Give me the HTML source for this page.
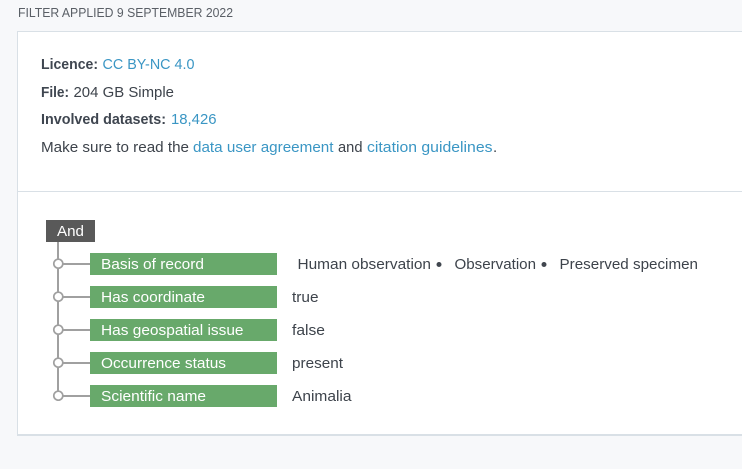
<!DOCTYPE html>
<html lang="en">
<head>
<meta charset="utf-8">
<title>Filter applied</title>
<style>
html,body{margin:0;padding:0;background:#f7f8fa;width:742px;height:469px;overflow:hidden}
svg{display:block}
text{font-family:"Liberation Sans",Arial,sans-serif;font-size:15px;fill:#3d434b}
.b{font-weight:700;fill:#3f4650}
.l{fill:#3a96c4}
.w{fill:#fff}
</style>
</head>
<body>
<svg width="742" height="469" viewBox="0 0 742 469" xmlns="http://www.w3.org/2000/svg">
<rect width="742" height="469" fill="#f7f8fa"/>
<text x="18" y="17" style="font-size:13px;fill:#5a5f66" textLength="215" lengthAdjust="spacingAndGlyphs">FILTER APPLIED 9 SEPTEMBER 2022</text>
<rect x="17.5" y="31.5" width="730" height="403" fill="#fff" stroke="#d9e0e6"/>
<rect x="17" y="434" width="725" height="2" fill="#d9e0e6"/>
<rect x="18" y="191" width="724" height="1" fill="#d9e0e6"/>

<text x="41" y="69" class="b" textLength="57" lengthAdjust="spacingAndGlyphs">Licence:</text>
<text x="102.5" y="69" class="l" textLength="92" lengthAdjust="spacingAndGlyphs">CC BY-NC 4.0</text>
<text x="41" y="97" class="b" textLength="28" lengthAdjust="spacingAndGlyphs">File:</text>
<text x="73.5" y="97" textLength="100.5" lengthAdjust="spacingAndGlyphs">204 GB Simple</text>
<text x="41" y="124" class="b" textLength="125" lengthAdjust="spacingAndGlyphs">Involved datasets:</text>
<text x="171" y="124" class="l" textLength="45.5" lengthAdjust="spacingAndGlyphs">18,426</text>
<text x="41" y="152" textLength="148" lengthAdjust="spacingAndGlyphs">Make sure to read the</text>
<text x="193" y="152" class="l" textLength="140.5" lengthAdjust="spacingAndGlyphs">data user agreement</text>
<text x="338" y="152" textLength="24.5" lengthAdjust="spacingAndGlyphs">and</text>
<text x="367" y="152" class="l" textLength="125.5" lengthAdjust="spacingAndGlyphs">citation guidelines</text>
<text x="493" y="152">.</text>

<rect x="46" y="220" width="49" height="22" fill="#595959"/>
<text x="57" y="236" class="w" textLength="27" lengthAdjust="spacingAndGlyphs">And</text>

<g fill="none" stroke="#a0a0a0" stroke-width="2">
<path d="M58 242V396"/>
<path d="M58 264H90M58 297H90M58 330H90M58 363H90M58 396H90"/>
<g fill="#fff" stroke-width="1.7">
<circle cx="58.3" cy="263.7" r="4.5"/>
<circle cx="58.3" cy="296.7" r="4.5"/>
<circle cx="58.3" cy="329.7" r="4.5"/>
<circle cx="58.3" cy="362.7" r="4.5"/>
<circle cx="58.3" cy="395.7" r="4.5"/>
</g>
</g>

<g fill="#68a96b">
<rect x="90" y="253" width="187" height="22"/>
<rect x="90" y="286" width="187" height="22"/>
<rect x="90" y="319" width="187" height="22"/>
<rect x="90" y="352" width="187" height="22"/>
<rect x="90" y="385" width="187" height="22"/>
</g>
<text x="101" y="269" class="w" textLength="103" lengthAdjust="spacingAndGlyphs">Basis of record</text>
<text x="101" y="302" class="w" textLength="104" lengthAdjust="spacingAndGlyphs">Has coordinate</text>
<text x="101" y="335" class="w" textLength="142.5" lengthAdjust="spacingAndGlyphs">Has geospatial issue</text>
<text x="101" y="368" class="w" textLength="125" lengthAdjust="spacingAndGlyphs">Occurrence status</text>
<text x="101" y="401" class="w" textLength="105" lengthAdjust="spacingAndGlyphs">Scientific name</text>

<text x="297.5" y="269" textLength="133.5" lengthAdjust="spacingAndGlyphs">Human observation</text>
<circle cx="439" cy="264.5" r="2.5" fill="#41474f"/>
<text x="454.5" y="269" textLength="81.5" lengthAdjust="spacingAndGlyphs">Observation</text>
<circle cx="544" cy="264.5" r="2.5" fill="#41474f"/>
<text x="559.5" y="269" textLength="138.5" lengthAdjust="spacingAndGlyphs">Preserved specimen</text>
<text x="292" y="302" textLength="26.5" lengthAdjust="spacingAndGlyphs">true</text>
<text x="292" y="335" textLength="33" lengthAdjust="spacingAndGlyphs">false</text>
<text x="292" y="368" textLength="51" lengthAdjust="spacingAndGlyphs">present</text>
<text x="292" y="401" textLength="59.5" lengthAdjust="spacingAndGlyphs">Animalia</text>
</svg>
</body>
</html>
